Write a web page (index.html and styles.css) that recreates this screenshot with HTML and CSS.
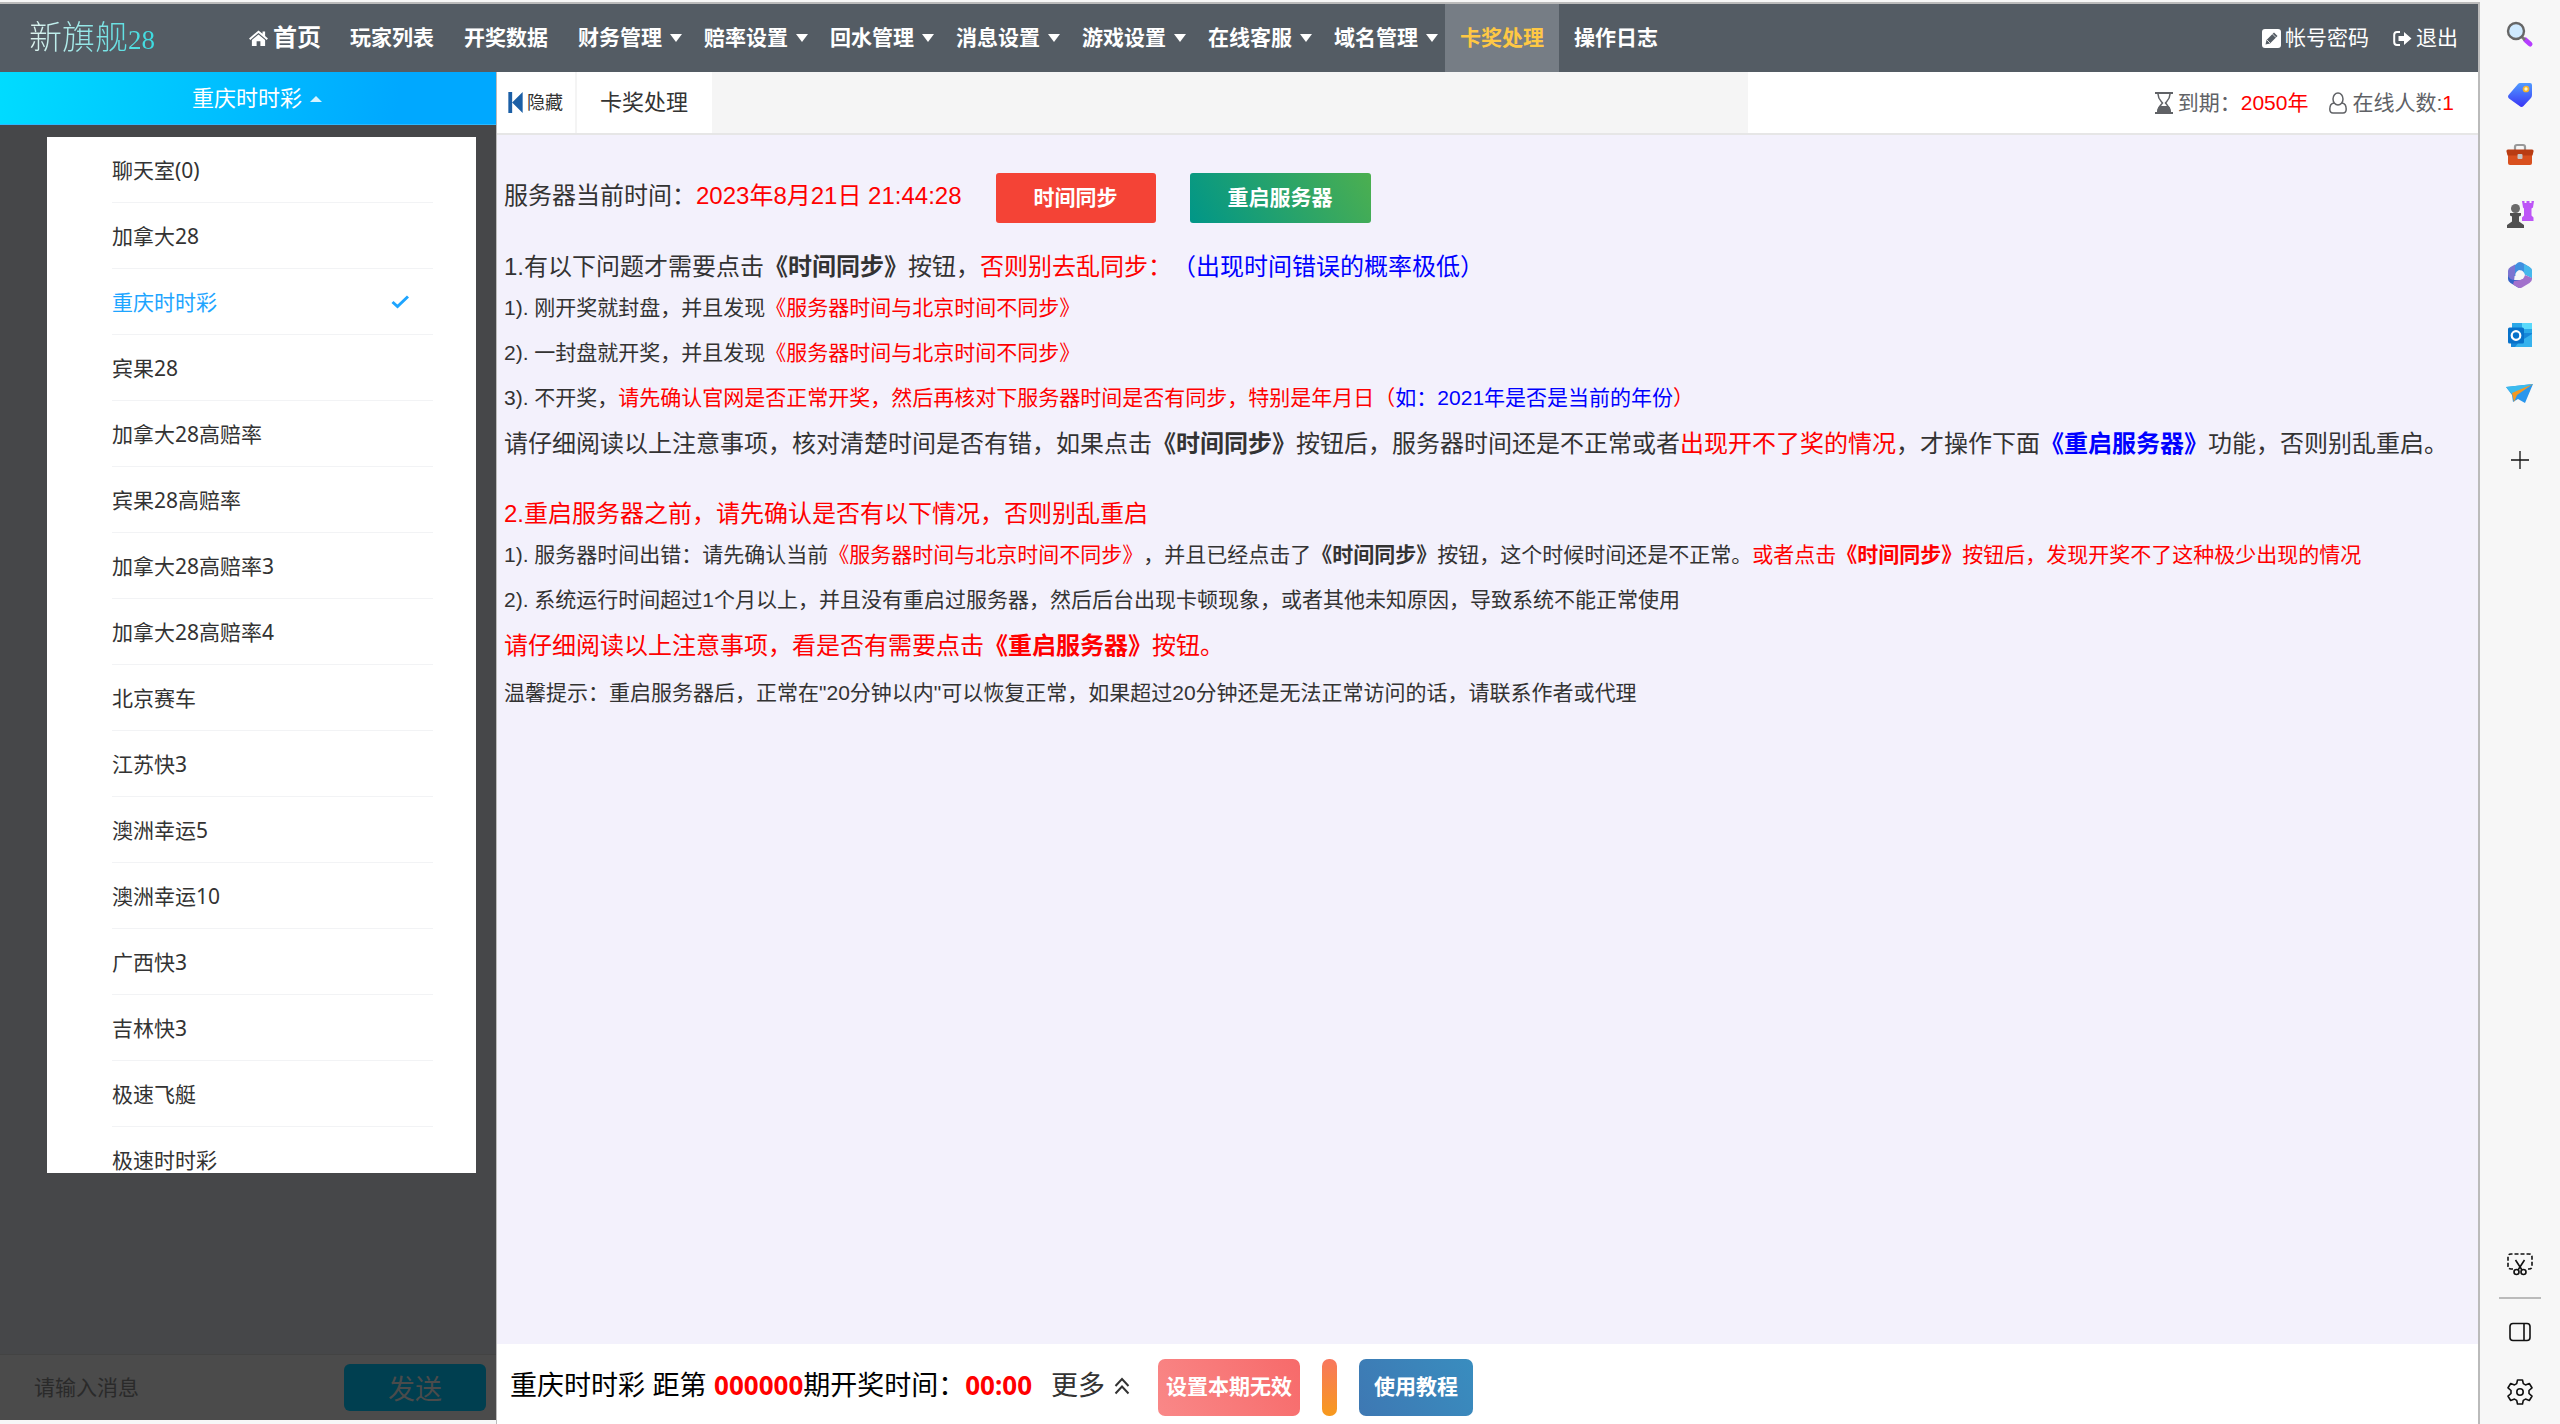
FILE: index.html
```html
<!DOCTYPE html>
<html lang="zh-CN">
<head>
<meta charset="utf-8">
<title>卡奖处理</title>
<link rel="stylesheet" href="styles.css">
</head>
<body>
<div class="shell">
  <div class="app">
    <header class="topbar">
      <a class="logo" href="#">新旗舰<span class="logo-num">28</span></a>
      <nav class="nav">
        <a class="nav-item nav-home" href="#"><svg class="home-icon" viewBox="0 0 20 18"><path fill="currentColor" d="M10 .5 0 9l1.300 1.500L10 3.200l8.700 7.300L20 9l-3-2.600V1.500h-2.700v2.600zM10 4.700 3 10.600V17h5v-5h4v5h5v-6.400z"/></svg>首页</a>
        <a class="nav-item" href="#">玩家列表</a>
        <a class="nav-item" href="#">开奖数据</a>
        <a class="nav-item has-menu" href="#">财务管理</a>
        <a class="nav-item has-menu" href="#">赔率设置</a>
        <a class="nav-item has-menu" href="#">回水管理</a>
        <a class="nav-item has-menu" href="#">消息设置</a>
        <a class="nav-item has-menu" href="#">游戏设置</a>
        <a class="nav-item has-menu" href="#">在线客服</a>
        <a class="nav-item has-menu" href="#">域名管理</a>
        <a class="nav-item active" href="#">卡奖处理</a>
        <a class="nav-item" href="#">操作日志</a>
      </nav>
      <div class="account">
        <a href="#"><svg class="small-icon" viewBox="0 0 19 19"><rect width="19" height="19" rx="3" fill="#fff"/><path d="m3.500 15.500 1-4.500L12 3.500l3.500 3.500L8 14.500z" fill="#545c64"/><path d="m5 11 3 3M10.500 5l3.500 3.500" stroke="#fff" stroke-width=".8"/></svg>帐号密码</a>
        <a href="#"><svg class="small-icon" viewBox="0 0 19 17"><path d="M7 2H4Q1.200 2 1.200 5v7q0 3 2.800 3h3" fill="none" stroke="#fff" stroke-width="2"/><path d="M5.500 6H11V2l7.500 6.500L11 15v-4H5.500z" fill="#fff"/></svg>退出</a>
      </div>
    </header>
    <div class="body">
      <aside class="side">
        <button class="game-title" type="button">重庆时时彩</button>
        <div class="mask">
          <ul class="games">
            <li><a href="#">聊天室(0)</a></li>
            <li><a href="#">加拿大28</a></li>
            <li><a class="current" href="#">重庆时时彩<svg class="tick" viewBox="0 0 18 14"><path d="m1.500 7 5 4.500L17 1.500" fill="none" stroke="currentColor" stroke-width="3"/></svg></a></li>
            <li><a href="#">宾果28</a></li>
            <li><a href="#">加拿大28高赔率</a></li>
            <li><a href="#">宾果28高赔率</a></li>
            <li><a href="#">加拿大28高赔率3</a></li>
            <li><a href="#">加拿大28高赔率4</a></li>
            <li><a href="#">北京赛车</a></li>
            <li><a href="#">江苏快3</a></li>
            <li><a href="#">澳洲幸运5</a></li>
            <li><a href="#">澳洲幸运10</a></li>
            <li><a href="#">广西快3</a></li>
            <li><a href="#">吉林快3</a></li>
            <li><a href="#">极速飞艇</a></li>
            <li><a href="#">极速时时彩</a></li>
          </ul>
        </div>
        <form class="chat">
          <input type="text" placeholder="请输入消息" aria-label="消息">
          <button type="button">发送</button>
        </form>
      </aside>
      <main class="main">
        <div class="tabs">
          <button class="hide" type="button"><svg class="hide-icon" viewBox="0 0 15 22"><path d="M0 0h4v22H0zM15 0v22L4 11z" fill="#1b5fa6"/></svg>隐藏</button>
          <a class="tab" href="#">卡奖处理</a>
          <div class="tab-track"></div>
          <div class="status">
            <span class="stat"><svg class="stat-icon" viewBox="0 0 18 22"><path d="M0 1h18M0 21h18" stroke="#606266" stroke-width="2"/><path d="M3 2c0 5 3 7 4.500 9C6 13 3 15 3 20h12c0-5-3-7-4.500-9C12 9 15 7 15 2" fill="none" stroke="#606266" stroke-width="1.500"/><path d="M2 20c0-3 1.500-6 3.500-6h7c2 0 3.500 3 3.500 6z" fill="#606266"/></svg>到期：<b>2050年</b></span>
            <span class="stat"><svg class="stat-icon" viewBox="0 0 18 22"><g fill="none" stroke="#606266" stroke-width="1.500"><ellipse cx="9" cy="7" rx="5" ry="6"/><path d="M5 11C2 11.500 .8 14 .8 17c0 3 1 4 3.200 4h10c2.200 0 3.200-1 3.200-4 0-3-1.200-5.500-4.200-6"/></g></svg>在线人数:<b>1</b></span>
          </div>
        </div>
        <section class="content">
          <div class="clock">
            <span>服务器当前时间：<i>2023年8月21日 21:44:28</i></span>
            <button class="sync" type="button">时间同步</button>
            <button class="restart" type="button">重启服务器</button>
          </div>
          <h2>1.有以下问题才需要点击<strong>《时间同步》</strong>按钮，<i>否则别去乱同步：</i><em>（出现时间错误的概率极低）</em></h2>
          <p>1). 刚开奖就封盘，并且发现<i>《服务器时间与北京时间不同步》</i></p>
          <p>2). 一封盘就开奖，并且发现<i>《服务器时间与北京时间不同步》</i></p>
          <p>3). 不开奖，<i>请先确认官网是否正常开奖，然后再核对下服务器时间是否有同步，特别是年月日（<em>如：2021年是否是当前的年份</em>）</i></p>
          <p class="note">请仔细阅读以上注意事项，核对清楚时间是否有错，如果点击<strong>《时间同步》</strong>按钮后，服务器时间还是不正常或者<i>出现开不了奖的情况</i>，才操作下面<em><strong>《重启服务器》</strong></em>功能，否则别乱重启。</p>
          <h2 class="second"><i>2.重启服务器之前，请先确认是否有以下情况，否则别乱重启</i></h2>
          <p>1). 服务器时间出错：请先确认当前<i>《服务器时间与北京时间不同步》</i>，并且已经点击了<strong>《时间同步》</strong>按钮，这个时候时间还是不正常。<i>或者点击<strong>《时间同步》</strong>按钮后，发现开奖不了这种极少出现的情况</i></p>
          <p>2). 系统运行时间超过1个月以上，并且没有重启过服务器，然后后台出现卡顿现象，或者其他未知原因，导致系统不能正常使用</p>
          <p class="note"><i>请仔细阅读以上注意事项，看是否有需要点击<strong>《重启服务器》</strong>按钮。</i></p>
          <p>温馨提示：重启服务器后，正常在"20分钟以内"可以恢复正常，如果超过20分钟还是无法正常访问的话，请联系作者或代理</p>
        </section>
        <footer class="drawbar">
          <span class="issue">重庆时时彩 距第 <b>000000</b>期开奖时间：<b>00:00</b></span>
          <a class="more" href="#">更多<svg class="up-icon" viewBox="0 0 16 18"><path d="m1.500 9 6.500-7 6.500 7M1.500 16.500 8 9.500l6.500 7" fill="none" stroke="currentColor" stroke-width="2"/></svg></a>
          <button class="void" type="button">设置本期无效</button>
          <button class="empty" type="button" aria-label="状态"></button>
          <button class="guide" type="button">使用教程</button>
        </footer>
      </main>
    </div>
  </div>
  <aside class="rail">
    <button type="button" aria-label="搜索"><svg viewBox="0 0 28 28"><path d="m19.500 19 4.500 4" stroke="#b63dff" stroke-width="5" stroke-linecap="round"/><path d="m15 15 4 4" stroke="#777" stroke-width="3"/><circle cx="10" cy="10" r="8" fill="#cfeaff" stroke="#666" stroke-width="2.400"/></svg></button>
    <button type="button" aria-label="购物"><svg viewBox="0 0 28 28"><defs><linearGradient id="tag" x1="0" y1="0" x2="0" y2="1"><stop offset="0" stop-color="#4f9bff"/><stop offset="1" stop-color="#3a35f5"/></linearGradient></defs><path d="M14 2h10q2 0 2 2v10q0 2-1.500 3.500l-7 7.500q-2 2-4 0L3 17.500q-2-2 0-4L12 3q1-1 2-1z" fill="url(#tag)"/><circle cx="20" cy="8" r="2.500" fill="#fff4c0" stroke="#f5b32c" stroke-width="1.700"/></svg></button>
    <button type="button" aria-label="工具"><svg viewBox="0 0 28 28"><path d="M9 9V6q0-2 2-2h6q2 0 2 2v3" fill="none" stroke="#999" stroke-width="2.200"/><rect x="2" y="12" width="24" height="12" rx="2" fill="#d9501e"/><path d="M2 8.500h24q2 0 1.500 2l-1 4H1.500l-1-4Q0 8.500 2 8.500z" fill="#b93c12"/><rect x="11.500" y="13" width="5" height="5" rx="1" fill="#c5c5c5"/></svg></button>
    <button type="button" aria-label="游戏"><svg viewBox="0 0 28 28"><path d="M16 0h2.500v2h2V0h3v2h2V0H28l-1 6.500-1.500 1v7l2 2V20H16v-3.500l2-2v-7l-1-1z" fill="#bd55f7"/><circle cx="9.500" cy="7.500" r="4.500" fill="#6a6a6a"/><path d="M4 12h11v2.500l-2 1v5l5 3.500v3H1v-3l5-3.500v-5l-2-1z" fill="#505050"/></svg></button>
    <button type="button" aria-label="Microsoft 365"><svg viewBox="0 0 28 28"><path d="M12 1.500q2-1 4 0l7.500 4.500q2.500 1.500 2.500 4v7l-8-4-5-4-3 6H3V9z" fill="#3f8fe0"/><path d="m18 3 5.500 3Q26 7.500 26 10v7l-8-4z" fill="#45b8ec"/><path d="M9 3.500v8L8 20l-3.500-1Q2 17.500 2 15v-5q0-2.500 2.500-4z" fill="#7c74d0"/><path d="M2 14q1 5 7 5h5v7.800q-1 .2-2-.3L4.500 22Q2 20.500 2 18z" fill="#3464c8"/><path d="m8 20 6-1 5-5 7 3v1q0 2.500-2.500 4L16 26.500q-2 1-4 0l-5-3z" fill="#a271cc"/><circle cx="14" cy="14" r="4.700" fill="#f7f7f7"/></svg></button>
    <button type="button" aria-label="Outlook"><svg viewBox="0 0 28 28"><path d="M6 2h20v11H6z" fill="#2aa8e8"/><path d="M16 2h10v6H16z" fill="#59d9fb"/><path d="M5 12h21v14H5z" fill="#1687d9"/><path d="m13 21 13-8v13H9z" fill="#36b2ed"/><rect x="2" y="6.500" width="16" height="16" rx="1.500" fill="#0872ca"/><circle cx="10" cy="14.500" r="4.300" fill="none" stroke="#fff" stroke-width="2.200"/></svg></button>
    <button type="button" aria-label="发送"><svg viewBox="0 0 28 28"><path d="m0 6 27-3-8 19-7-4-5 3-1-7z" fill="#2996ed"/><path d="m0 6 27-3L6 13z" fill="#3bbbee"/><path d="M27 3 6 12l2 9 3-7z" fill="#f49822"/></svg></button>
    <button class="add" type="button" aria-label="添加"><svg viewBox="0 0 28 28"><path d="M14 5v18M5 14h18" stroke="#111" stroke-width="1.300"/></svg></button>
    <span class="rail-space"></span>
    <button type="button" aria-label="截图"><svg viewBox="0 0 28 28"><g fill="none" stroke="#111" stroke-width="1.600"><path d="M7 19H5q-3 0-3-3V7q0-3 3-3h18q3 0 3 3v9q0 3-3 3h-2" stroke-dasharray="4 2"/><path d="m9.500 10 6.500 10M18.500 10 12 20"/><circle cx="10.500" cy="22" r="2.500"/><circle cx="17.500" cy="22" r="2.500"/></g></svg></button>
    <hr>
    <button type="button" aria-label="侧栏"><svg viewBox="0 0 28 28"><g fill="none" stroke="#111" stroke-width="1.600"><rect x="4" y="5.500" width="20" height="17" rx="3"/><path d="M18 6v16"/></g></svg></button>
    <button type="button" aria-label="设置"><svg viewBox="0 0 28 28"><g fill="none" stroke="#111" stroke-width="1.600" stroke-linejoin="round"><path d="M11.500 2h5l.8 3.600 2.200 1.300 3.800-1.400 2.700 4.300-3 2.700v3l3 2.700-2.700 4.300-3.800-1.400-2.200 1.300-.8 3.600h-5l-.8-3.600-2.200-1.300-3.800 1.400L2 18.200l3-2.700v-3L2 9.800l2.700-4.300 3.800 1.400 2.200-1.300z"/><circle cx="14" cy="14" r="3.200"/></g></svg></button>
  </aside>
</div>
</body>
</html>
```
FILE: styles.css
```css
* { box-sizing: border-box; }

body {
  margin: 0;
  font: 21px/30px "Liberation Sans", "Noto Sans CJK SC", sans-serif;
  color: #333;
  background: #f7f7f7;
  text-spacing-trim: space-all;
}

a { color: inherit; text-decoration: none; }
button { font: inherit; border: 0; padding: 0; cursor: pointer; }
i, em { font-style: normal; }
i { color: #f00; }
em { color: #00f; }

.shell { display: flex; height: 100vh; padding-top: 2px; }

.app {
  flex: 1;
  min-width: 0;
  display: flex;
  flex-direction: column;
  border-top: 2px solid #bbb;
  border-right: 2px solid #bbb;
}

/* Top navigation */
.topbar {
  display: flex;
  flex: none;
  height: 68px;
  color: #fff;
  background: #545c64;
}

.logo {
  width: 234px;
  padding-left: 29px;
  font-size: 33px;
  font-weight: 300;
  line-height: 68px;
  background: linear-gradient(90deg, #e0f2ee 30px, #3ddbe0 150px);
  background-clip: text;
  color: transparent;
}

.logo-num { font-family: "Liberation Serif", serif; font-size: 27px; }

.nav { display: flex; font-weight: bold; }
.nav-item { display: flex; align-items: center; padding: 0 15px; }
.nav-home { gap: 5px; padding-right: 14px; font-size: 24px; }
.home-icon { width: 19px; height: 17px; }
.has-menu { gap: 8px; padding-right: 7px; }

.has-menu::after {
  content: "";
  border: 6px solid transparent;
  border-top: 8px solid #fff;
  border-bottom: 0;
}

.active { color: #ffc844; background: #767d85; }

.account { display: flex; gap: 24px; margin-left: auto; padding-right: 20px; }
.account a { display: flex; align-items: center; gap: 4px; }
.small-icon { width: 19px; height: 19px; }

/* Left column */
.body { display: flex; flex: 1; min-height: 0; }

.side {
  display: flex;
  flex-direction: column;
  width: 496px;
  margin-bottom: 4px;
  background: #464749;
}

.game-title {
  display: flex;
  align-items: center;
  justify-content: center;
  gap: 8px;
  height: 53px;
  padding: 2px 0 0 18px;
  font-size: 22px;
  color: #fff;
  background: linear-gradient(100deg, #00dcff, #00a8ff 80%);
  border-bottom: 1px solid #2bb8ff;
}

.game-title::after {
  content: "";
  border: 6px solid transparent;
  border-bottom: 6px solid #d5f3ff;
  border-top: 0;
}

.mask { flex: 1; min-height: 0; padding: 12px 20px 181px 47px; }

.games {
  height: 100%;
  margin: 0;
  padding: 0 43px 0 65px;
  overflow: hidden;
  list-style: none;
  font-family: "Noto Sans", "Noto Sans CJK SC", sans-serif;
  background: #fff;
}

.games a {
  display: flex;
  align-items: center;
  justify-content: space-between;
  height: 66px;
  padding: 1px 24px 0 0;
  border-bottom: 1px solid #f2f3f5;
}

.games .current { color: #1ea5ff; }
.tick { width: 18px; height: 14px; }

.chat {
  display: flex;
  align-items: center;
  height: 66px;
  padding: 0 10px 0 34px;
  background: #4b4b4b;
  border-top: 1px solid #434343;
}

.chat input {
  flex: 1;
  min-width: 0;
  padding: 0;
  font: inherit;
  color: #222;
  background: none;
  border: 0;
}

.chat input::placeholder { color: #2a2a2a; }

.chat button {
  width: 142px;
  height: 47px;
  padding-top: 4px;
  font-size: 27px;
  color: #4b4b4b;
  background: #003f50;
  border-radius: 6px;
}

/* Right column */
.main {
  flex: 1;
  min-width: 0;
  display: flex;
  flex-direction: column;
  border-left: 1px solid #bbb;
  background: #f3f1fc;
}

.tabs {
  display: flex;
  flex: none;
  height: 63px;
  background: #fff;
  border-bottom: 2px solid #e6e6e6;
}

.hide {
  display: flex;
  align-items: center;
  gap: 4px;
  padding: 0 12px 0 11px;
  font-size: 18px;
  color: #333;
  background: #fff;
  border-right: 2px solid #f4f4f4;
}

.hide-icon { width: 15px; height: 21px; }
.tab { padding: 0 24px 0 23px; font-size: 22px; line-height: 61px; }
.tab-track { flex: 1; background: #f5f5f5; }

.status {
  display: flex;
  align-items: center;
  justify-content: flex-end;
  gap: 21px;
  width: 730px;
  padding-right: 24px;
  color: #606266;
}

.stat { display: flex; align-items: center; }
.stat b { font-weight: normal; color: #f00; }
.stat-icon { width: 18px; height: 22px; margin-right: 5px; }

.content { flex: 1; min-height: 0; padding: 38px 7px 0; }
.clock { display: flex; align-items: center; margin-bottom: 26px; font-size: 24px; }
.clock span { padding-bottom: 4px; }

.clock button {
  height: 50px;
  padding: 0 38px;
  font-size: 21px;
  font-weight: bold;
  color: #fff;
  border-radius: 3px;
}

.sync { margin: 0 34px; background: #f44336; }
.restart { background: linear-gradient(60deg, #009688, #4caf50); }

.content h2 { margin: 0; font-size: 24px; font-weight: normal; line-height: 36px; }
.content p { margin: 0; line-height: 45px; }
.content .note { font-size: 24px; line-height: 48px; }
.content .second { margin-top: 28px; }

/* Draw status bar */
.drawbar {
  display: flex;
  align-items: center;
  flex: none;
  height: 80px;
  padding: 6px 13px 0;
  font-size: 27px;
  color: #000;
  background: #fff;
}

.drawbar b { font-family: "Noto Sans", sans-serif; font-size: 26px; color: #f00; }
.issue, .more { padding-bottom: 3px; }
.more { display: flex; align-items: center; gap: 9px; margin: 0 28px 0 19px; color: #333; }
.up-icon { width: 16px; height: 18px; }

.drawbar button {
  height: 57px;
  margin-right: 22px;
  font-size: 21px;
  font-weight: bold;
  color: #fff;
  border-radius: 7px;
}

.void { width: 142px; background: linear-gradient(60deg, #f98888, #f76a6a); }
.empty { width: 15px; background: linear-gradient(0deg, #f79a1c, #f8775f); }
.guide { width: 114px; background: linear-gradient(60deg, #3e78b3, #398dbf); }

/* Tool rail */
.rail {
  display: flex;
  flex-direction: column;
  align-items: center;
  width: 80px;
  padding: 3px 0 2px;
}

.rail button { flex: none; width: 60px; height: 60px; background: none; }
.rail svg { display: block; width: 28px; height: 28px; margin: 0 auto; }
.rail .add { margin-top: 5px; }
.rail-space { flex: 1; }
.rail hr { width: 42px; height: 2px; margin: 3px 0; border: 0; background: #bbb; }
```
